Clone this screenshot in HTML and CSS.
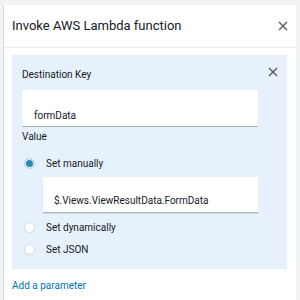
FILE: index.html
```html
<!DOCTYPE html>
<html lang="en">
<head>
    <meta charset="UTF-8">
    <title>Invoke AWS Lambda function</title>
    <link rel="stylesheet" href="styles.css">
</head>
<body>
    <div class="panel">
        <!-- Header -->
        <div class="panel-header">
            <h1>Invoke AWS Lambda function</h1>
            <button class="close-btn" aria-label="Close">
                <svg width="10" height="10" viewBox="0 0 10 10"><path d="M1 1 L9 9 M9 1 L1 9" stroke="#545b64" stroke-width="1.4" fill="none"/></svg>
            </button>
        </div>

        <!-- Body -->
        <div class="panel-body">
            <div class="param">
                <button class="remove-btn" aria-label="Remove">
                    <svg width="10" height="10" viewBox="0 0 10 10"><path d="M1 1 L9 9 M9 1 L1 9" stroke="#545b64" stroke-width="1.4" fill="none"/></svg>
                </button>
                <div class="label">Destination Key</div>
                <div class="input key-input">formData</div>
                <div class="label value-label">Value</div>

                <div class="radio-row first">
                    <span class="radio checked"></span>
                    <span>Set manually</span>
                </div>
                <div class="input value-input">$.Views.ViewResultData.FormData</div>
                <div class="radio-row">
                    <span class="radio"></span>
                    <span>Set dynamically</span>
                </div>
                <div class="radio-row last">
                    <span class="radio"></span>
                    <span>Set JSON</span>
                </div>
            </div>

            <a href="#" class="add-link">Add a parameter</a>
        </div>
    </div>
</body>
</html>
```

FILE: styles.css
```css
* {
    margin: 0;
    padding: 0;
    box-sizing: border-box;
}

body {
    font-family: Roboto, 'Noto Sans', sans-serif;
    background-color: #f2f3f3;
    color: #16191f;
    height: 300px;
    overflow: hidden;
}

/* Panel */
.panel {
    margin: 5px 4px 0 3px;
    height: 295px;
    background-color: #fff;
    border-left: 1px solid #d5dbdb;
}

.panel-header {
    height: 43px;
    display: flex;
    align-items: center;
    justify-content: space-between;
    padding: 0 8px 0 8px;
    border-bottom: 1px solid #eaeded;
}

    .panel-header h1 {
        font-size: 13px;
        font-weight: 400;
        line-height: 18px;
    }

.close-btn,
.remove-btn {
    border: none;
    background: none;
    display: flex;
    cursor: pointer;
}

/* Body */
.panel-body {
    padding: 7px 9px 0 8px;
}

.param {
    position: relative;
    background-color: #e6f1fb;
    padding: 12px 29px 10px 10px;
    display: flex;
    flex-direction: column;
}

.remove-btn {
    position: absolute;
    top: 12px;
    right: 9px;
}

.label {
    font-size: 10px;
    line-height: 16px;
    height: 16px;
}

.value-label {
    margin-top: 2px;
}

.input {
    background-color: #fff;
    border-bottom: 1px solid #aab7b8;
    display: flex;
    align-items: flex-end;
    font-size: 10px;
    line-height: 16px;
}

.key-input {
    height: 37px;
    margin-top: 7px;
    padding: 0 12px 2px 12px;
}

.value-input {
    height: 36px;
    margin: 4px 0 0 21px;
    padding: 0 11px 3px 11px;
    box-shadow: 0 1px 1px rgba(0, 0, 0, 0.08);
}

/* Radios */
.radio-row {
    height: 20px;
    display: flex;
    align-items: center;
    gap: 11px;
    padding-left: 2px;
    margin-top: 4px;
    font-size: 10px;
}

    .radio-row.first {
        margin-top: 8px;
    }

    .radio-row.last {
        margin-top: 2px;
    }

.radio {
    width: 11px;
    height: 11px;
    border-radius: 50%;
    background-color: #fff;
    border: 1px solid #d5dbdb;
}

    .radio.checked {
        background-color: #2e86b4;
        border: 1px solid #c9dde9;
        box-shadow: inset 0 0 0 1px #fff;
    }

.add-link {
    display: block;
    margin-top: 9px;
    font-size: 10px;
    line-height: 16px;
    color: #0073bb;
    text-decoration: none;
}
```
